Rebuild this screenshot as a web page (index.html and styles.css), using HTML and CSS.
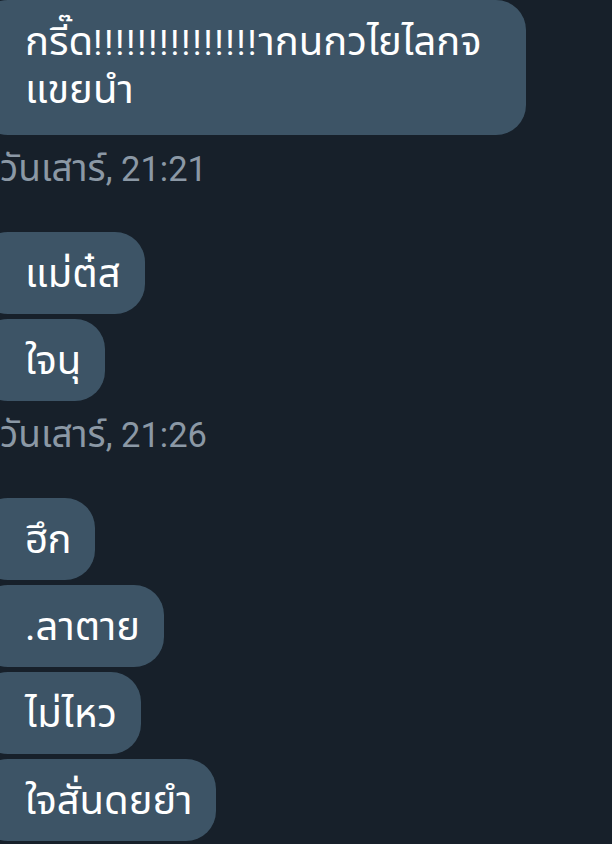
FILE: index.html
```html
<!DOCTYPE html>
<html lang="th">
<head>
<meta charset="utf-8">
<link rel="stylesheet" href="styles.css">
</head>
<body>
<main class="chat">
  <div class="bubble bubble-wide">กรี๊ด<span class="bang">!!!!!!!!!!!!!!!</span>ากนกวไยไลกจ<br>แขยนำ</div>
  <div class="stamp"><span class="stamp-day">วันเสาร์</span>, 21:21</div>
  <div class="group">
    <div class="bubble">แม่ต๋ส</div>
    <div class="bubble">ใจนุ</div>
  </div>
  <div class="stamp"><span class="stamp-day">วันเสาร์</span>, 21:26</div>
  <div class="group">
    <div class="bubble">ฮึก</div>
    <div class="bubble">.ลาตาย</div>
    <div class="bubble">ไม่ไหว</div>
    <div class="bubble">ใจสั่นดยยำ</div>
  </div>
</main>
</body>
</html>
```

FILE: styles.css
```css
html, body {
  margin: 0;
  padding: 0;
  background: #17202a;
}
body {
  width: 612px;
  height: 844px;
  overflow: hidden;
  font-family: Roboto, "Noto Sans Thai", sans-serif;
}
.chat {
  display: flex;
  flex-direction: column;
  align-items: flex-start;
}
.group {
  display: flex;
  flex-direction: column;
  align-items: flex-start;
  gap: 5px;
}
.bubble {
  margin-left: -22px;
  padding: 18px 24px 16px 47px;
  background: #3d5466;
  color: #ffffff;
  font-size: 40px;
  line-height: 48px;
  border-radius: 30px;
  white-space: nowrap;
}
.bubble-wide {
  box-sizing: border-box;
  width: 548px;
  padding-bottom: 21px;
}
.bang {
  font-size: 35px;
  line-height: 1;
  letter-spacing: 2px;
}
.stamp {
  margin: 14px 0 43px 0;
  color: #8b98a5;
  font-size: 34.5px;
  line-height: 40px;
}
.stamp-day {
  font-size: 37px;
  line-height: 1;
}
```
